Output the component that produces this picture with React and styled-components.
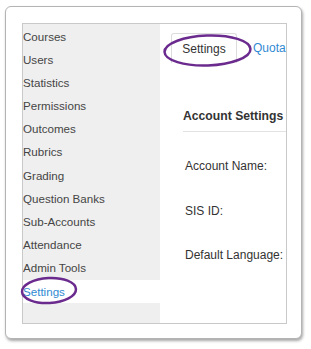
import React from 'react';
import styled, { createGlobalStyle } from 'styled-components';

const GlobalStyle = createGlobalStyle`
    html, body {
        margin: 0;
        padding: 0;
        background: #ffffff;
        font-family: "Liberation Sans", Arial, sans-serif;
    }
`;

const Page = styled.div`
    width: 311px;
    height: 349px;
    padding: 6px 0 0 5px;
    box-sizing: border-box;
`;

const Card = styled.div`
    position: relative;
    width: 297px;
    height: 333px;
    box-sizing: border-box;
    padding: 16px 0 0 16px;
    background: #ffffff;
    border: 1px solid #b4b4b4;
    border-radius: 6px;
    box-shadow: 1px 2px 3px rgba(0, 0, 0, 0.35);
`;

const Frame = styled.div`
    width: 265px;
    height: 301px;
    box-sizing: border-box;
    border: 1px solid #c9c9c9;
    display: flex;
    overflow: hidden;
`;

const Sidebar = styled.ul`
    list-style: none;
    margin: 0;
    padding: 0.5px 0 0 0;
    width: 137px;
    flex-shrink: 0;
    background: #efefef;
`;

const NavItem = styled.li`
    height: 23.2px;
    line-height: 23.2px;
    font-size: 11.6px;
    color: ${p => (p.active ? '#2f8ad3' : '#454545')};
    background: ${p => (p.active ? '#ffffff' : 'transparent')};
    white-space: nowrap;
`;

const Content = styled.div`
    flex: 1;
    min-width: 0;
    padding: 8px 0 0 11px;
    overflow: hidden;
`;

const Tabs = styled.div`
    display: flex;
    align-items: flex-end;
    height: 30px;
    border-bottom: 1px solid #dcdcdc;
    white-space: nowrap;
`;

const Tab = styled.div`
    height: 30px;
    box-sizing: border-box;
    display: flex;
    align-items: center;
    justify-content: center;
    font-size: 12px;
    color: ${p => (p.active ? '#333333' : '#2f8ad3')};
    width: ${p => (p.active ? '66px' : 'auto')};
    padding: ${p => (p.active ? '0' : '0 0 0 16px')};
    border: ${p => (p.active ? '1px solid #dcdcdc' : 'none')};
    border-bottom: none;
    border-radius: 3px 3px 0 0;
    background: #ffffff;
    margin-bottom: -1px;
`;

const Section = styled.div`
    padding: 46px 0 0 12px;
`;

const Heading = styled.h2`
    margin: 0;
    font-size: 12.2px;
    font-weight: bold;
    color: #333333;
    white-space: nowrap;
    padding-bottom: 8px;
    border-bottom: 1px solid #e2e2e2;
`;

const Fields = styled.div`
    display: flex;
    flex-direction: column;
    gap: 30.5px;
    padding: 27px 0 0 2px;
`;

const Label = styled.div`
    font-size: 12px;
    line-height: 14px;
    color: #333333;
    white-space: nowrap;
`;

const Mark = styled.svg`
    position: absolute;
    left: ${p => p.x}px;
    top: ${p => p.y}px;
    overflow: visible;
    pointer-events: none;
`;

const items = [
    'Courses', 'Users', 'Statistics', 'Permissions', 'Outcomes', 'Rubrics',
    'Grading', 'Question Banks', 'Sub-Accounts', 'Attendance', 'Admin Tools', 'Settings',
];

function App() {
    return (
        <Page>
            <GlobalStyle />
            <Card>
                <Frame>
                    <Sidebar>
                        {items.map(name => (
                            <NavItem key={name} active={name === 'Settings'}>{name}</NavItem>
                        ))}
                    </Sidebar>
                    <Content>
                        <Tabs>
                            <Tab active>Settings</Tab>
                            <Tab>Quota</Tab>
                        </Tabs>
                        <Section>
                            <Heading>Account Settings</Heading>
                            <Fields>
                                <Label>Account Name:</Label>
                                <Label>SIS ID:</Label>
                                <Label>Default Language:</Label>
                            </Fields>
                        </Section>
                    </Content>
                </Frame>
                {/* purple highlight rings */}
                <Mark x={156} y={22} width="95" height="40">
                    <ellipse cx="45.5" cy="21.5" rx="43" ry="15" fill="none" stroke="#6b2b8e" strokeWidth="2.5" transform="rotate(-2 45.5 21.5)" />
                </Mark>
                <Mark x={10} y={264} width="60" height="34">
                    <ellipse cx="33" cy="19.5" rx="27" ry="12.5" fill="none" stroke="#6b2b8e" strokeWidth="2.5" transform="rotate(-3 33 19.5)" />
                </Mark>
            </Card>
        </Page>
    );
}

export default App;
